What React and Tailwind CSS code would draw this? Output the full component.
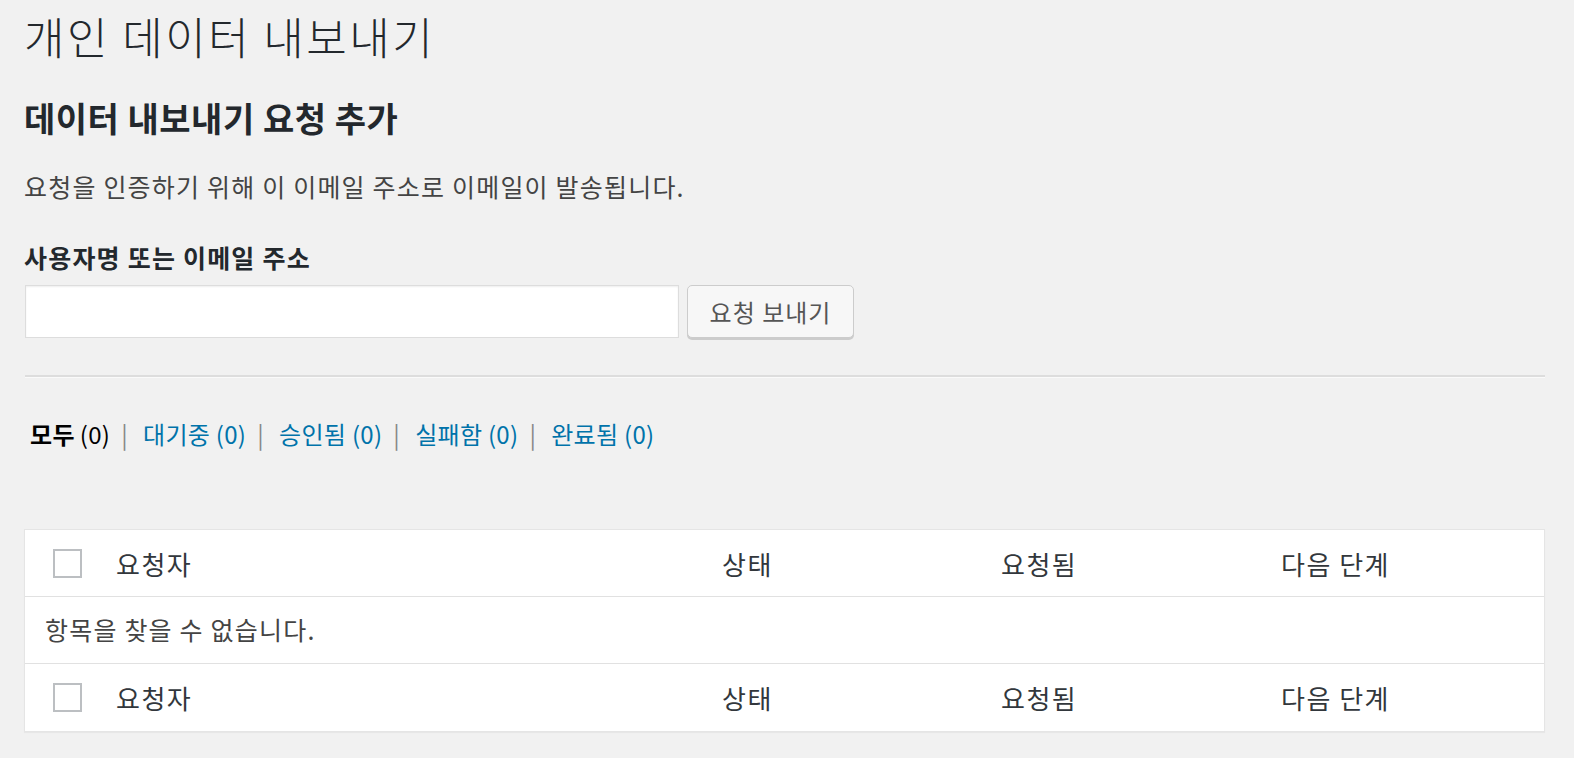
export default function App() {
  const views = [
    { label: "대기중", count: 0 },
    { label: "승인됨", count: 0 },
    { label: "실패함", count: 0 },
    { label: "완료됨", count: 0 },
  ];

  const HeaderRow = ({ bottom }) => (
    <div
      className={
        "flex h-[67px] items-center text-[26px] tracking-[1.5px] text-[#32373c] " +
        (bottom ? "" : "border-b border-[#e1e1e1]")
      }
    >
      <div className="w-[91px] shrink-0 pl-[28px]">
        <span className="block h-[29px] w-[29px] border-2 border-[#bcbfc2] bg-white" />
      </div>
      <div className="w-[606px] shrink-0">요청자</div>
      <div className="w-[279px] shrink-0">상태</div>
      <div className="w-[280px] shrink-0">요청됨</div>
      <div className="flex-1">다음 단계</div>
    </div>
  );

  return (
    <div className="h-[758px] overflow-hidden bg-[#f1f1f1] pl-[24px] pr-[29px] pt-[8px] font-['Noto_Sans_CJK_KR','Noto_Sans',sans-serif] text-[#444]">
      <h1 className="text-[44px] leading-[56px] font-light tracking-[2.5px] text-[#23282d]">
        개인 데이터 내보내기
      </h1>

      <h2 className="mt-[34px] text-[34px] leading-[40px] font-bold tracking-[0.5px] text-[#23282d]">
        데이터 내보내기 요청 추가
      </h2>

      <p className="mt-[32px] text-[25px] leading-[32px] tracking-[1.2px]">
        요청을 인증하기 위해 이 이메일 주소로 이메일이 발송됩니다.
      </p>

      <label className="mt-[39px] block text-[25px] leading-[32px] font-bold tracking-[1.2px] text-[#23282d]">
        사용자명 또는 이메일 주소
      </label>

      <div className="mt-[12px] flex items-start gap-[8px] pl-[1px]">
        <input
          type="text"
          className="h-[53px] w-[654px] border border-[#ddd] bg-white shadow-[inset_0_1px_2px_rgba(0,0,0,0.07)] outline-none"
        />
        <button className="h-[53px] w-[167px] rounded-[5px] border border-[#ccc] bg-[#f7f7f7] text-[24px] tracking-[1px] text-[#555] shadow-[0_2px_0_#ccc]">
          요청 보내기
        </button>
      </div>

      <div className="mt-[37px] ml-[1px] border-t-2 border-b border-t-[#ddd] border-b-[#fafafa]" />

      <div className="mt-[40px] flex items-center pl-[6px] text-[24px] leading-[32px] tracking-[0.3px]">
        <span className="font-bold text-black">모두</span>
        <span className="ml-[5px] text-black">(0)</span>
        {views.map((v) => (
          <span key={v.label} className="flex items-center">
            <span className="ml-[11px] mr-[15px] text-[#888]">|</span>
            <span className="text-[#0073aa]">
              {v.label} ({v.count})
            </span>
          </span>
        ))}
      </div>

      <div className="mt-[79px] border border-[#e5e5e5] bg-white shadow-[0_1px_1px_rgba(0,0,0,0.04)]">
        <HeaderRow />
        <div className="flex h-[67px] items-center border-b border-[#e1e1e1] pl-[20px] text-[25px] tracking-[1.2px] text-[#444]">
          항목을 찾을 수 없습니다.
        </div>
        <HeaderRow bottom />
      </div>
    </div>
  );
}
